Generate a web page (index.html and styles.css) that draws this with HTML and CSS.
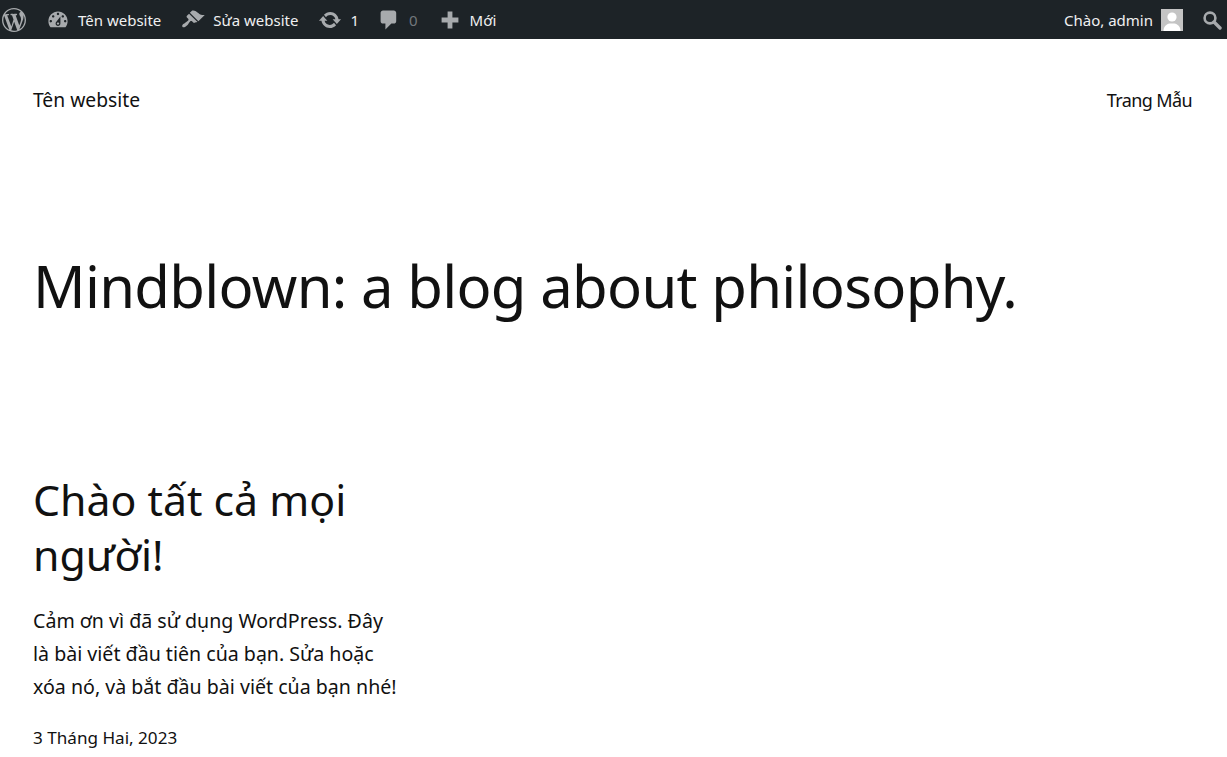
FILE: index.html
```html
<!DOCTYPE html>
<html lang="vi">
<head>
    <meta charset="UTF-8">
    <meta name="viewport" content="width=device-width, initial-scale=1.0">
    <title>Tên website</title>
    <link rel="stylesheet" href="styles.css">
</head>
<body>
    <div class="adminbar">
        <div class="bar-group">
            <a class="bar-item logo-item" href="#">
                <svg class="bar-icon" viewBox="0 0 20 20"><path d="M20 10c0-5.51-4.49-10-10-10C4.48 0 0 4.49 0 10c0 5.52 4.48 10 10 10 5.51 0 10-4.48 10-10zM7.78 15.37L4.37 6.22c.55-.02 1.17-.08 1.17-.08.5-.06.44-1.13-.06-1.11 0 0-1.45.11-2.37.11-.18 0-.37 0-.58-.01C4.12 2.69 6.87 1.11 10 1.11c2.33 0 4.45.87 6.05 2.34-.68-.11-1.65.39-1.65 1.58 0 .74.45 1.36.9 2.1.35.61.55 1.36.55 2.46 0 1.49-1.4 5-1.4 5l-3.03-8.37c.54-.02.82-.17.82-.17.5-.05.44-1.25-.06-1.22 0 0-1.44.12-2.38.12-.87 0-2.33-.12-2.33-.12-.5-.03-.56 1.2-.06 1.22l.92.08 1.26 3.41zM17.41 10c.24-.64.74-1.87.43-4.25.7 1.29 1.05 2.71 1.05 4.25 0 3.29-1.73 6.24-4.4 7.78.97-2.59 1.94-5.2 2.92-7.78zM6.1 18.09C3.12 16.65 1.11 13.53 1.11 10c0-1.3.23-2.48.72-3.59C3.25 10.3 4.67 14.2 6.1 18.09zm4.03-6.63l2.58 6.98c-.86.29-1.76.45-2.71.45-.79 0-1.57-.11-2.29-.33.81-2.38 1.62-4.74 2.42-7.1z"/></svg>
            </a>
            <a class="bar-item" href="#">
                <svg class="bar-icon" viewBox="0 0 20 20"><path d="M3.76 16h12.48c1.1-1.37 1.76-3.11 1.76-5 0-4.42-3.58-8-8-8s-8 3.58-8 8c0 1.89.66 3.63 1.76 5zM10 4c.55 0 1 .45 1 1s-.45 1-1 1-1-.45-1-1 .45-1 1-1zM6 6c.55 0 1 .45 1 1s-.45 1-1 1-1-.45-1-1 .45-1 1-1zm8 0c.55 0 1 .45 1 1s-.45 1-1 1-1-.45-1-1 .45-1 1-1zm-5.37 5.55L12 7v6c0 1.1-.9 2-2 2s-2-.9-2-2c0-.57.24-1.08.63-1.45zM4 10c.55 0 1 .45 1 1s-.45 1-1 1-1-.45-1-1 .45-1 1-1zm12 0c.55 0 1 .45 1 1s-.45 1-1 1-1-.45-1-1 .45-1 1-1zm-5 3c0-.55-.45-1-1-1s-1 .45-1 1 .45 1 1 1 1-.45 1-1z" fill-rule="evenodd"/></svg>
                <span>Tên website</span>
            </a>
            <a class="bar-item" href="#">
                <svg class="bar-icon" viewBox="0 0 20 20"><path d="M14.48 11.06L7.41 3.99l1.5-1.5c.5-.56 2.3-.47 3.51.32 1.21.8 1.43 1.28 2.91 2.1 1.18.64 2.45 1.26 4.45.85zm-.71.71L6.7 4.7 4.93 6.47c-.39.39-.39 1.02 0 1.41l1.06 1.06c.39.39.39 1.03 0 1.42-.6.6-1.43 1.11-2.21 1.69-.35.26-.7.53-1.01.84C1.43 13.23.4 14.89 1.3 15.79c.9.9 2.56-.13 3.92-1.47.31-.31.58-.66.84-1.01.58-.78 1.09-1.61 1.69-2.21.39-.39 1.03-.39 1.42 0l1.06 1.06c.39.39 1.02.39 1.41 0z"/></svg>
                <span>Sửa website</span>
            </a>
            <a class="bar-item updates-item" href="#">
                <svg class="bar-icon" viewBox="0 0 20 20"><path d="M10.2 3.28c3.53 0 6.43 2.61 6.92 6h2.08l-3.5 4-3.5-4h2.32c-.45-1.97-2.21-3.45-4.32-3.45-1.45 0-2.73.71-3.54 1.78L4.95 5.66C6.23 4.2 8.11 3.28 10.2 3.28zm-.4 13.44c-3.52 0-6.43-2.61-6.92-6H.8l3.5-4c1.17 1.33 2.33 2.67 3.5 4H5.48c.45 1.97 2.21 3.45 4.32 3.45 1.45 0 2.73-.71 3.54-1.78l1.71 1.95c-1.28 1.46-3.15 2.38-5.25 2.38z"/></svg>
                <span>1</span>
            </a>
            <a class="bar-item" href="#">
                <svg class="bar-icon" viewBox="0 0 20 20"><path d="M5 2h9c1.1 0 2 .9 2 2v7c0 1.1-.9 2-2 2h-2l-5 5v-5H5c-1.1 0-2-.9-2-2V4c0-1.1.9-2 2-2z"/></svg>
                <span class="count-zero">0</span>
            </a>
            <a class="bar-item" href="#">
                <svg class="bar-icon" viewBox="0 0 20 20"><path d="M8 3h4v5h5v4h-5v5H8v-5H3V8h5z"/></svg>
                <span>Mới</span>
            </a>
        </div>
        <div class="bar-group">
            <a class="bar-item account" href="#">
                <span>Chào, admin</span>
                <svg class="avatar" viewBox="0 0 22 22"><rect width="22" height="22" fill="#c4c4c4"/><circle cx="11" cy="8" r="4.6" fill="#fff"/><path d="M2.5 22c0-4.5 3-7 6-7.5h5c3 .5 6 3 6 7.5z" fill="#fff"/></svg>
            </a>
            <a class="bar-item search-item" href="#">
                <svg class="search-icon" viewBox="0 0 20 20"><circle cx="8" cy="8" r="5.4" fill="none" stroke="#a7aaad" stroke-width="2.6"/><path d="M12 12l6 6" stroke="#a7aaad" stroke-width="3.4" stroke-linecap="round"/></svg>
            </a>
        </div>
    </div>

    <header class="site-header">
        <a class="site-title" href="#">Tên website</a>
        <a class="site-nav" href="#">Trang Mẫu</a>
    </header>

    <h1 class="page-title">Mindblown: a blog about philosophy.</h1>

    <main class="post-grid">
        <article class="post">
            <h2>Chào tất cả mọi người!</h2>
            <p>Cảm ơn vì đã sử dụng WordPress. Đây là bài viết đầu tiên của bạn. Sửa hoặc xóa nó, và bắt đầu bài viết của bạn nhé!</p>
            <div class="post-date">3 Tháng Hai, 2023</div>
        </article>
    </main>
</body>
</html>
```

FILE: styles.css
```css
body {
    margin: 0;
    background-color: #fff;
    color: #111;
    font-family: "Noto Sans", Arial, sans-serif;
    overflow: hidden;
}
a {
    color: inherit;
    text-decoration: none;
}
.adminbar {
    display: flex;
    justify-content: space-between;
    align-items: center;
    height: 39px;
    background-color: #1d2327;
    color: #f0f0f1;
    font-size: 15px;
}
.bar-group {
    display: flex;
    align-items: center;
}
.bar-item {
    display: flex;
    align-items: center;
    gap: 8px;
    padding: 0 10px;
}
.logo-item {
    padding: 0 10px 0 2px;
}
.updates-item {
    margin-right: -2px;
}
.bar-icon {
    width: 24px;
    height: 24px;
    fill: #a7aaad;
}
.count-zero {
    color: #72777c;
}
.avatar {
    width: 22px;
    height: 22px;
}
.search-item {
    padding: 0 5px 0 9px;
}
.search-icon {
    width: 20px;
    height: 20px;
}
.site-header {
    display: flex;
    justify-content: space-between;
    align-items: center;
    padding: 47px 35px 0 33px;
    line-height: 28px;
}
.site-title {
    font-size: 19.3px;
}
.site-nav {
    font-size: 18px;
    letter-spacing: -0.6px;
}
.page-title {
    margin: 131px 0 0;
    padding-left: 33px;
    font-size: 58px;
    font-weight: 400;
    letter-spacing: -0.7px;
    line-height: 82px;
}
.post-grid {
    display: grid;
    grid-template-columns: repeat(3, 1fr);
    gap: 30px;
    padding: 0 33px;
    margin-top: 145px;
}
.post h2 {
    margin: 0;
    font-size: 42.8px;
    font-weight: 400;
    line-height: 55px;
}
.post p {
    margin: 22px 0 0;
    font-size: 19.6px;
    line-height: 33px;
}
.post-date {
    margin-top: 23px;
    font-size: 17.1px;
    line-height: 24px;
}
```
